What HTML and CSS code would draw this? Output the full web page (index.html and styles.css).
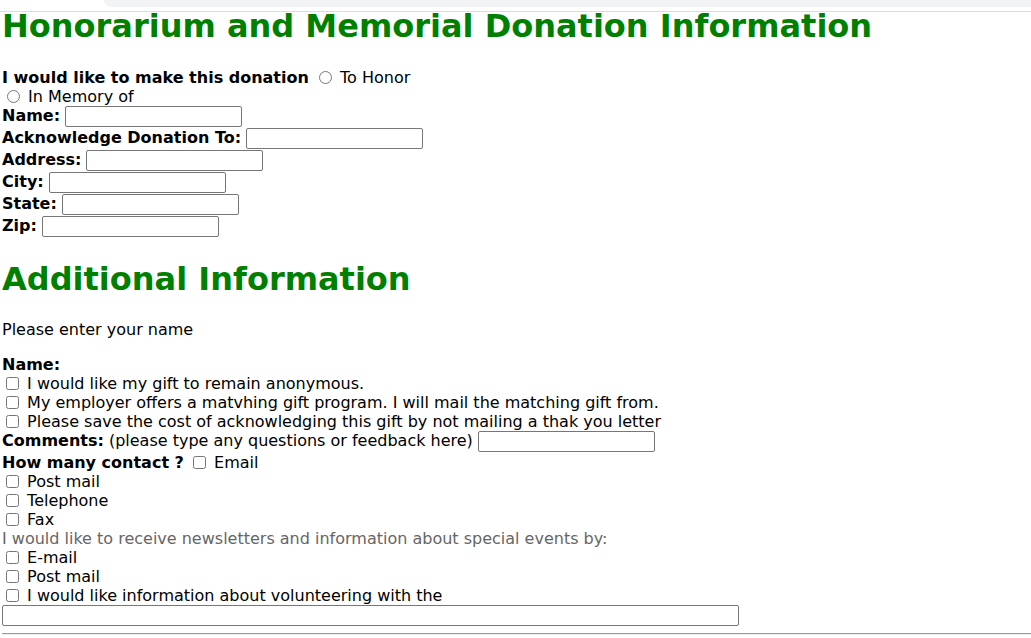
FILE: index.html
```html
<!DOCTYPE html>
<html lang="en">
<head>
<meta charset="utf-8">
<title>Honorarium and Memorial Donation Information</title>
<link rel="stylesheet" href="styles.css">
</head>
<body>
<div class="chrome"><div class="tabbar"></div></div>
<main class="page">
  <h1 class="title">Honorarium and Memorial Donation Information</h1>
  <form class="form">
    <section class="donation">
      <div class="line"><b>I would like to make this donation</b> <label><input class="radio" type="radio" name="kind"> To Honor</label></div>
      <div class="line"><label><input class="radio" type="radio" name="kind"> In Memory of</label></div>
      <div class="field"><b class="lbl">Name:</b><input class="text" type="text"></div>
      <div class="field"><b class="lbl">Acknowledge Donation To:</b><input class="text" type="text"></div>
      <div class="field"><b class="lbl">Address:</b><input class="text" type="text"></div>
      <div class="field"><b class="lbl">City:</b><input class="text" type="text"></div>
      <div class="field"><b class="lbl">State:</b><input class="text" type="text"></div>
      <div class="field"><b class="lbl">Zip:</b><input class="text" type="text"></div>
    </section>

    <h2 class="subtitle">Additional Information</h2>

    <section class="extra">
      <p class="intro">Please enter your name</p>
      <div class="line"><b>Name:</b></div>
      <div class="line"><label><input class="check" type="checkbox"> I would like my gift to remain anonymous.</label></div>
      <div class="line"><label><input class="check" type="checkbox"> My employer offers a matvhing gift program. I will mail the matching gift from.</label></div>
      <div class="line"><label><input class="check" type="checkbox"> Please save the cost of acknowledging this gift by not mailing a thak you letter</label></div>
      <div class="field"><b class="lbl">Comments:</b><span class="lbl">(please type any questions or feedback here)</span><input class="text" type="text"></div>
      <div class="line"><b>How many contact ?</b> <label><input class="check" type="checkbox"> Email</label></div>
      <div class="line"><label><input class="check" type="checkbox"> Post mail</label></div>
      <div class="line"><label><input class="check" type="checkbox"> Telephone</label></div>
      <div class="line"><label><input class="check" type="checkbox"> Fax</label></div>
      <div class="line muted">I would like to receive newsletters and information about special events by:</div>
      <div class="line"><label><input class="check" type="checkbox"> E-mail</label></div>
      <div class="line"><label><input class="check" type="checkbox"> Post mail</label></div>
      <div class="line"><label><input class="check" type="checkbox"> I would like information about volunteering with the</label></div>
      <div class="wide-row"><input class="text wide" type="text"></div>
    </section>
    <hr class="rule">
  </form>
</main>
</body>
</html>
```

FILE: styles.css
```css
html, body {
  margin: 0;
  padding: 0;
  background: #ffffff;
}

body {
  color: #000000;
  font-family: "DejaVu Sans", Verdana, sans-serif;
  font-size: 16px;
  overflow: hidden;
}

.chrome {
  height: 11px;
  border-bottom: 1px solid #dadce0;
  background: #ffffff;
  position: relative;
}

.tabbar {
  position: absolute;
  left: 104px;
  right: 0;
  top: 0;
  height: 7px;
  background: #f1f3f4;
  border-bottom-left-radius: 8px;
}

.page {
  padding: 0 0 0 2px;
}

.title {
  margin: 0 0 26px;
  font-size: 32px;
  line-height: 29px;
  font-weight: bold;
  color: #008000;
}

.form {
  margin: 0;
}

.line {
  box-sizing: border-box;
  padding-top: 1px;
  height: 19px;
  line-height: 19px;
  white-space: nowrap;
}

.field {
  display: flex;
  align-items: flex-start;
  height: 22px;
  gap: 5px;
  line-height: 19px;
  white-space: nowrap;
}

.lbl {
  display: block;
  padding-top: 1px;
}

.text {
  box-sizing: border-box;
  width: 177px;
  height: 21px;
  margin: 1px 0 0;
  padding: 1px 2px;
  border: 1px solid #767676;
  border-radius: 2px;
  background: #ffffff;
  font: 13px "DejaVu Sans", sans-serif;
}

.radio {
  width: 13px;
  height: 13px;
  margin: 0 3px 0 5px;
  vertical-align: middle;
  position: relative;
  top: -1px;
}

.check {
  width: 13px;
  height: 13px;
  margin: 0 3px 0 4px;
  vertical-align: middle;
  position: relative;
  top: -1px;
}

.subtitle {
  margin: 23px 0 0;
  font-size: 32px;
  line-height: 38px;
  font-weight: bold;
  color: #008000;
}

.intro {
  box-sizing: border-box;
  margin: 21px 0 16px;
  padding-top: 1px;
  height: 19px;
  line-height: 19px;
}

.muted {
  color: #666666;
}

.wide-row {
  height: 22px;
  padding-top: 1px;
  box-sizing: border-box;
}

.wide {
  width: 737px;
  margin: 0;
}

.rule {
  margin: 7px 0 0;
  border: 0;
  border-top: 1px solid #9a9a9a;
  border-bottom: 1px solid #eeeeee;
  height: 0;
}
```
